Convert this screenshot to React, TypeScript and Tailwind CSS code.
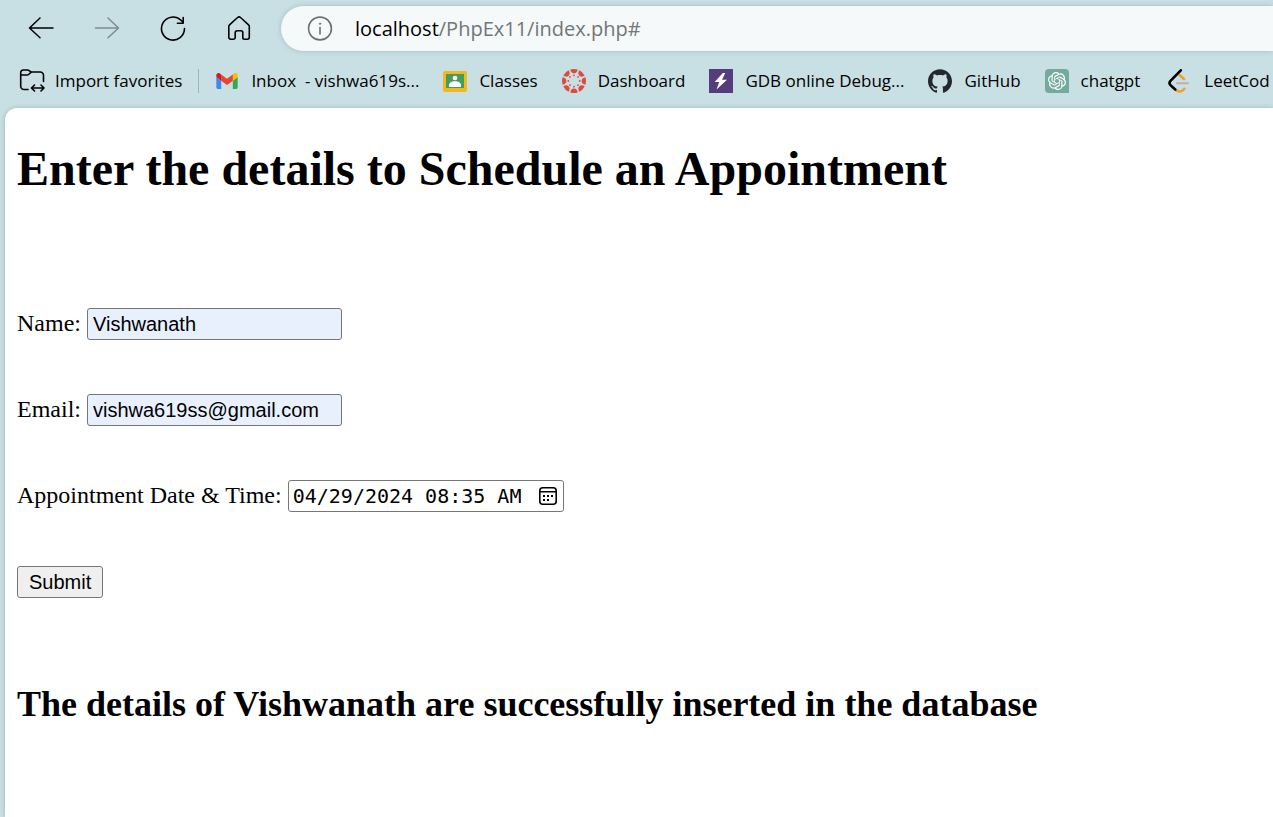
import { useState, type ReactNode } from "react";
import { SiOpenai, SiGithub } from "react-icons/si";

const stroke = {
  fill: "none",
  stroke: "currentColor",
  strokeLinecap: "round" as const,
  strokeLinejoin: "round" as const,
};

function BackIcon() {
  return (
    <svg viewBox="0 0 26 26" className="size-6.5" {...stroke} strokeWidth={1.5}>
      <path d="M25 12H1.500M12 2 1.500 12l10.500 9.800" />
    </svg>
  );
}

function ForwardIcon() {
  return (
    <svg viewBox="0 0 26 26" className="size-6.5" {...stroke} strokeWidth={1.5}>
      <path d="M1.500 12h23M14 2 24.500 12 14 21.800" />
    </svg>
  );
}

function ReloadIcon() {
  return (
    <svg viewBox="0 0 26 26" className="size-6.5" {...stroke} strokeWidth={1.6}>
      <path d="M24.500 12.500A11.500 11.500 0 1 1 21 4.300l2 2M23.200 1.500v5.800h-5.800" />
    </svg>
  );
}

function HomeIcon() {
  return (
    <svg viewBox="0 0 26 26" className="size-6.5" {...stroke} strokeWidth={1.6}>
      <path d="M11.600 1.500a2.200 2.200 0 0 1 2.900 0l8.100 7.300a2 2 0 0 1 .7 1.500v11a1.900 1.900 0 0 1-1.900 1.900h-2.900a1.700 1.700 0 0 1-1.700-1.700v-4.900a1.800 1.800 0 0 0-1.800-1.800h-4a1.800 1.800 0 0 0-1.800 1.800v4.900a1.700 1.700 0 0 1-1.700 1.700H4.700a1.900 1.900 0 0 1-1.900-1.900v-11a2 2 0 0 1 .7-1.500z" />
    </svg>
  );
}

function InfoIcon() {
  return (
    <svg viewBox="0 0 26 26" className="size-6.5" {...stroke} strokeWidth={1.6}>
      <circle cx="13" cy="12.500" r="11.400" />
      <path d="M13 11.500v6.500" />
      <circle cx="13" cy="7.700" r="0.700" fill="currentColor" strokeWidth={0.8} />
    </svg>
  );
}

function ImportIcon() {
  return (
    <svg viewBox="0 0 26 24" className="h-6 w-6.5 shrink-0" {...stroke} strokeWidth={1.6}>
      <path d="M9 20.500H5A3.300 3.300 0 0 1 1.700 17.200V3.700A2.700 2.700 0 0 1 4.400 1h4c2 0 2.300 2 4.500 2h8.300a3.300 3.300 0 0 1 3.300 3.300v6.200M1.700 6h6.500c2.200 0 2.500-2.500 4.500-3" />
      <path d="M13 19h11.500M15.500 16 12.500 19l3 3M22 16l3 3-3 3" />
    </svg>
  );
}

function GmailIcon() {
  return (
    <svg viewBox="52 42 88 66" className="h-4 w-6 shrink-0">
      <path fill="#4285f4" d="M58 108h14V74L52 59v43c0 3.320 2.690 6 6 6" />
      <path fill="#34a853" d="M120 108h14c3.320 0 6-2.690 6-6V59l-20 15" />
      <path fill="#fbbc04" d="M120 48v26l20-15v-8c0-7.420-8.470-11.650-14.400-7.200" />
      <path fill="#ea4335" d="M72 74V48l24 18 24-18v26L96 92" />
      <path fill="#c5221f" d="M52 51v8l20 15V48l-5.600-4.200c-5.940-4.450-14.400-.220-14.400 7.200" />
    </svg>
  );
}

function ClassroomIcon() {
  return (
    <svg viewBox="0 0 24 24" className="size-6 shrink-0">
      <rect x="0" y="2" width="24" height="21" rx="2" fill="#f2b91f" />
      <rect x="3" y="5" width="18" height="14" fill="#469c5a" />
      <circle cx="12" cy="9" r="2.300" fill="#fff" />
      <path d="M6 18v-2c0-2.500 3-3.800 6-3.800s6 1.300 6 3.800v2z" fill="#fff" />
    </svg>
  );
}

const turns = [0, 45, 90, 135, 180, 225, 270, 315];

function CanvasIcon() {
  return (
    <svg viewBox="0 0 24 24" className="size-6 shrink-0" fill="#de4b3e">
      {turns.map((t) => (
        <g key={t} transform={`rotate(${t} 12 12)`}>
          <path d="M8.300.6a12 12 0 0 1 7.400 0C15.500 2.900 14 4.400 12 4.400S8.500 2.900 8.300.6z" />
          <circle cx="12" cy="6.300" r="0.900" />
        </g>
      ))}
    </svg>
  );
}

function BoltIcon() {
  return (
    <svg viewBox="0 0 24 24" className="size-6 shrink-0">
      <path fill="#553c7b" d="M0 0h24v24H0z" />
      <path fill="#fff" d="M13.800 4 5.700 13h4.500L7.500 20.500 18 10.800h-5L16.300 4z" />
    </svg>
  );
}

function ChatIcon() {
  return (
    <span className="flex size-6 shrink-0 items-center justify-center rounded-l-sm rounded-tr-sm bg-[#74aa9c] text-white">
      <SiOpenai className="size-4.5" />
    </span>
  );
}

function LeetCodeIcon() {
  return (
    <svg viewBox="-4 0 28 24" className="h-6 w-7 shrink-0" fill="none" strokeLinecap="round">
      <path d="M9 14.300h11" stroke="#b3b3b3" strokeWidth="2" />
      <path d="m11.500 6 4.500 4M7.500 20.500c2 2.500 5.500 2.700 7.500.7l1.300-1.400" stroke="#f0a02c" strokeWidth="2.600" />
      <path d="M12.800 1.300 2.500 11.900a3 3 0 0 0 0 4.200l4.700 4.400" stroke="#000" strokeWidth="2.600" />
    </svg>
  );
}

function CalendarIcon() {
  return (
    <svg viewBox="0 0 20 20" className="size-5" {...stroke} strokeWidth={1.6}>
      <rect x="1.800" y="1.800" width="16.400" height="16.400" rx="3" />
      <path d="M2 5.800h16" />
      <g fill="currentColor" stroke="none">
        <path d="M5 9h2v2H5zM9 9h2v2H9zM13 9h2v2h-2zM5 13h2v2H5zM9 13h2v2H9z" />
      </g>
    </svg>
  );
}

function Bookmark({ icon, children }: { icon: ReactNode; children: ReactNode }) {
  return (
    <a href="#" className="flex shrink-0 items-center gap-3 whitespace-pre">
      {icon}
      {children}
    </a>
  );
}

const box = "h-8 rounded-[3px] border border-[#767676] text-xl leading-6 text-black";
const field = `${box} font-['Liberation_Sans',sans-serif]`;

export default function App() {
  const [name, setName] = useState("Vishwanath");
  const [email, setEmail] = useState("vishwa619ss@gmail.com");
  const [when, setWhen] = useState("04/29/2024 08:35 AM");

  return (
    <div className="flex min-h-screen flex-col overflow-hidden bg-[#c8dfe3] font-['Open_Sans','Noto_Sans',sans-serif] text-black">
      <header>
        <div className="flex items-center pt-1.5 pl-7">
          <nav aria-label="Navigation" className="flex shrink-0 gap-10">
            <button type="button" aria-label="Back"><BackIcon /></button>
            <button type="button" aria-label="Forward" className="text-[#7d8c90]"><ForwardIcon /></button>
            <button type="button" aria-label="Refresh"><ReloadIcon /></button>
            <button type="button" aria-label="Home"><HomeIcon /></button>
          </nav>
          <div className="ml-[29px] flex h-[45px] grow items-center rounded-l-full bg-[#f5f9fa] pl-6.5 shadow-[0_0_5px_rgba(60,90,100,0.25)]">
            <button type="button" aria-label="Site information" className="text-[#6b6f71]"><InfoIcon /></button>
            <a href="#" className="ml-5.5 text-xl text-[#727678]">
              <span className="text-black">localhost</span>/PhpEx11/index.php#
            </a>
          </div>
        </div>
        <nav aria-label="Favorites" className="flex h-[57px] items-center gap-6 overflow-hidden pt-0.5 pl-[19px] text-[17px]">
          <div className="flex shrink-0 items-center gap-4">
            <button type="button" className="flex items-center gap-2.5">
              <ImportIcon />
              Import favorites
            </button>
            <span className="-mr-2 h-6 w-px bg-[#9fb3b8]" />
          </div>
          <Bookmark icon={<GmailIcon />}>{"Inbox  - vishwa619s..."}</Bookmark>
          <Bookmark icon={<ClassroomIcon />}>Classes</Bookmark>
          <Bookmark icon={<CanvasIcon />}>Dashboard</Bookmark>
          <Bookmark icon={<BoltIcon />}>GDB online Debug...</Bookmark>
          <Bookmark icon={<SiGithub className="size-6 shrink-0 text-[#24292f]" />}>GitHub</Bookmark>
          <Bookmark icon={<ChatIcon />}>chatgpt</Bookmark>
          <Bookmark icon={<LeetCodeIcon />}>LeetCod</Bookmark>
        </nav>
      </header>

      <main className="ml-[5px] grow rounded-tl-xl bg-white pt-[33px] pl-3 font-['Liberation_Serif',serif] text-2xl shadow-[0_0_4px_rgba(60,90,100,0.3)]">
        <h1 className="text-5xl leading-14 font-bold">Enter the details to Schedule an Appointment</h1>
        <form className="mt-[111px] flex flex-col items-start gap-[54px]" onSubmit={(e) => e.preventDefault()}>
          <div className="flex gap-1.5">
            <label htmlFor="name" className="leading-[30px]">Name:</label>
            <input id="name" type="text" value={name} onChange={(e) => setName(e.target.value)} className={`${field} w-[255px] bg-[#e8f0fe] px-[5px]`} />
          </div>
          <div className="flex gap-1.5">
            <label htmlFor="email" className="leading-[30px]">Email:</label>
            <input id="email" type="email" value={email} onChange={(e) => setEmail(e.target.value)} className={`${field} w-[255px] bg-[#e8f0fe] px-[5px]`} />
          </div>
          <div className="flex gap-1.5">
            <label htmlFor="when" className="leading-[30px]">Appointment Date &amp; Time:</label>
            <div className={`${box} flex w-[276px] items-center bg-white pr-[5px] pl-1`}>
              <input
                id="when"
                type="text"
                value={when}
                onChange={(e) => setWhen(e.target.value)}
                className="min-w-0 grow font-['DejaVu_Sans_Mono',monospace] outline-none"
              />
              <button type="button" aria-label="Show date and time picker"><CalendarIcon /></button>
            </div>
          </div>
          <button type="submit" className={`${field} bg-[#efefef] px-[11px]`}>Submit</button>
        </form>
        <h2 className="mt-21 text-4xl leading-11 font-bold">The details of Vishwanath are successfully inserted in the database</h2>
      </main>
    </div>
  );
}
